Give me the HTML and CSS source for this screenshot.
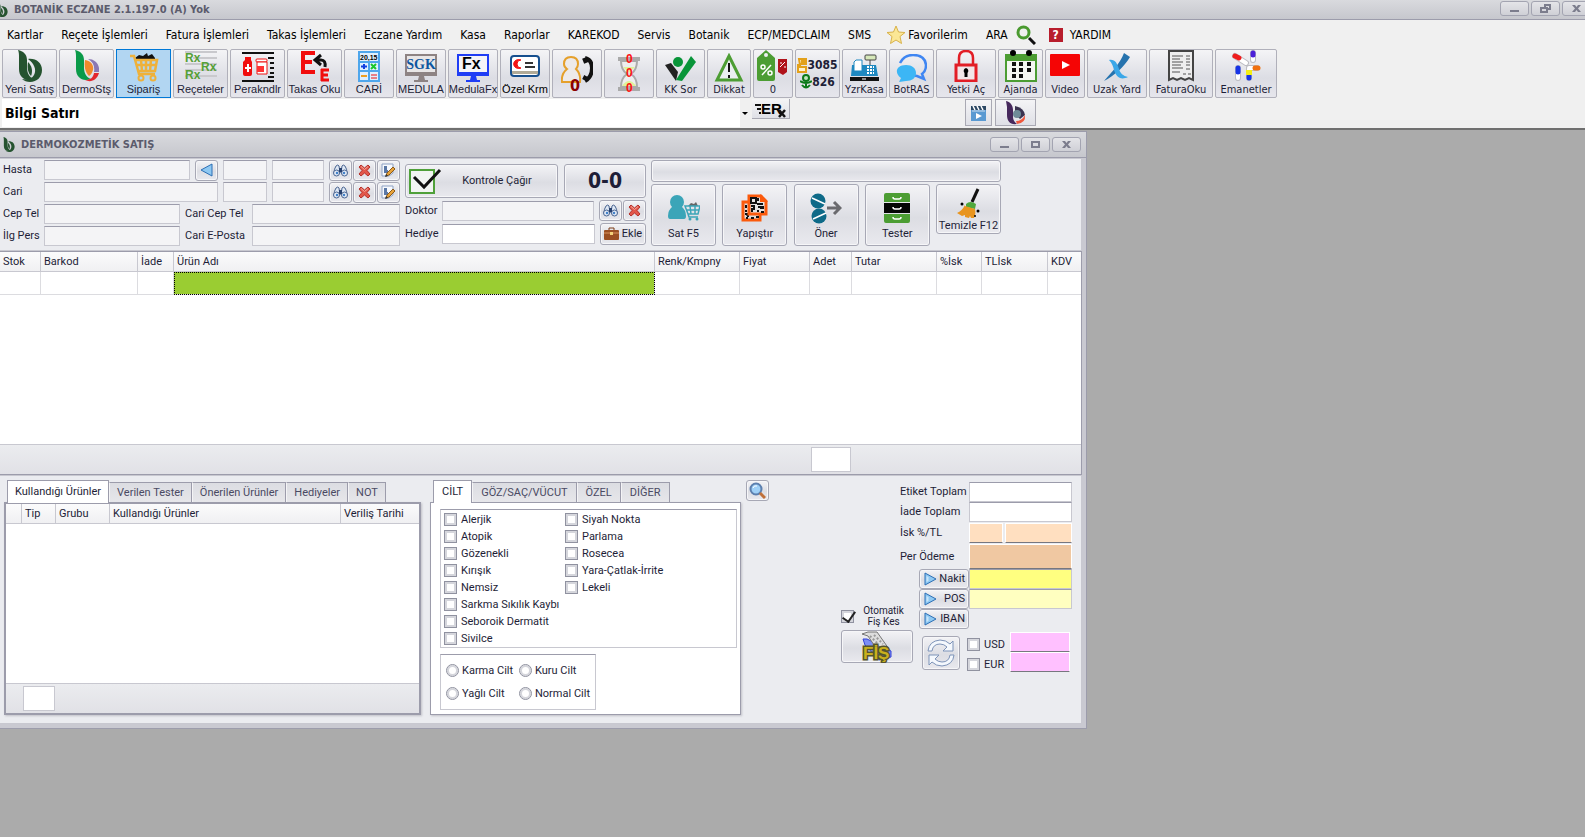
FILE: index.html
```html
<!DOCTYPE html>
<html lang="tr">
<head>
    <meta charset="UTF-8">
    <meta name="viewport" content="width=device-width, initial-scale=1.0">
    <title>BOTANİK ECZANE</title>
    <link rel="stylesheet" href="styles.css">
</head>
<body>
    <svg class="defs" aria-hidden="true">
        <symbol id="logo" viewBox="0 0 24 32">
            <path d="M0 0c5 1 9 4 9 10v7c0 6 2 10 7 12-8 3-15-1-15-10V8C1 5 1 2 0 0z"/>
            <path d="M10 9c8-1 14 4 14 11 0 7-5 12-12 12-3 0-6-1-8-3 5 1 10 0 12-4 3-5 0-12-6-16z"/>
            <path d="M10 12c4 4 5 9 3 14-3-3-4-8-3-14z"/>
        </symbol>
        <symbol id="binoculars" viewBox="0 0 15 13">
            <g fill="#dfe8f5" stroke="#4a6490"><path d="M3 2q2-2 3 0l1 7H1q0-4 2-7zM12 2q-2-2-3 0L8 9h6q0-4-2-7z"/><circle cx="3.500" cy="9" r="3"/><circle cx="11.500" cy="9" r="3"/></g>
            <path d="M6 4h3v4H6z" fill="#26406e"/><circle cx="4" cy="9" r="1.200" fill="#3f7fc8"/><circle cx="11" cy="9" r="1.200" fill="#3f7fc8"/>
        </symbol>
        <symbol id="cross" viewBox="0 0 13 13">
            <path d="M1 3l2-2 3.500 3L10 1l2 2-3 3.500L12 10l-2 2-3.500-3L3 12l-2-2 3-3.500z" fill="#e2574a" stroke="#b5302a"/>
            <path d="M3 2.500l3.500 3 3.500-3" fill="none" stroke="#f5a79c"/>
        </symbol>
        <symbol id="edit" viewBox="0 0 15 15">
            <path d="M1 1h11v9l-4 3H1z" fill="#f7f9fd" stroke="#8ea2c4"/><path d="M3 3h3v4h1v3H3z" fill="#5b78a6"/>
            <path d="M5 13l1-3 6-6 2 2-6 6z" fill="#e8a33a" stroke="#8b5a1a"/><path d="M4 14l1-3 2 2z" fill="#333"/>
        </symbol>
        <symbol id="play" viewBox="0 0 13 14"><path d="M1 1l11 6-11 6z" fill="#8ec8f2" stroke="#2c6fb5"/><path d="M2.500 4v6l2-1V5z" fill="#c9e6fa"/></symbol>
        <symbol id="minimize" viewBox="0 0 11 9"><path d="M1 6h9v2H1z"/></symbol>
        <symbol id="close" viewBox="0 0 11 9"><path d="M1 1h3l1.500 2L7 1h3L7 4.500 10 8H7L5.500 6 4 8H1l3-3.500z"/></symbol>
    </svg>

    <header class="titlebar app-title">
        <svg class="title-logo main-logo"><use href="#logo"/></svg>
        <h1>BOTANİK ECZANE 2.1.197.0 (A) Yok</h1>
        <div class="window-buttons">
            <button aria-label="Küçült"><svg><use href="#minimize"/></svg></button>
            <button aria-label="Geri yükle"><svg viewBox="0 0 11 9"><path fill-rule="evenodd" d="M4 0h7v6H8v3H0V3h4zm2 2v1h2v1h1V2zM2 5v2h4V5z"/></svg></button>
            <button aria-label="Kapat"><svg><use href="#close"/></svg></button>
        </div>
    </header>

    <nav class="menu">
        <a href="#">Kartlar</a>
        <a href="#">Reçete İşlemleri</a>
        <a href="#">Fatura İşlemleri</a>
        <a href="#">Takas İşlemleri</a>
        <a href="#">Eczane Yardım</a>
        <a href="#">Kasa</a>
        <a href="#">Raporlar</a>
        <a href="#">KAREKOD</a>
        <a href="#">Servis</a>
        <a href="#">Botanik</a>
        <a href="#">ECP/MEDCLAIM</a>
        <a href="#">SMS</a>
        <a href="#" class="menu-star"><svg width="20" height="20" viewBox="0 0 20 20"><path d="M10 1l2.500 6 6.500.5-5 4 1.500 7L10 15l-5.500 3.500 1.500-7-5-4L7.500 7z" fill="#fbe795" stroke="#d8b24a"/></svg>Favorilerim</a>
        <a href="#" class="menu-search">ARA<svg width="20" height="20" viewBox="0 0 20 20"><circle cx="7.500" cy="7.500" r="5.500" fill="none" stroke="#4a9a2f" stroke-width="3"/><path d="M13 13l6 6" stroke="#111" stroke-width="3"/></svg></a>
        <a href="#" class="menu-help"><span>?</span>YARDIM</a>
    </nav>

    <div class="toolbar">
        <button class="w55 sans"><svg width="24" height="32" fill="#25532f"><use href="#logo"/></svg>Yeni Satış</button>
        <button class="w55 sans"><svg width="24" height="32" viewBox="0 0 24 32"><path d="M0 0c5 1 9 4 9 10v7c0 6 2 10 7 12-8 3-15-1-15-10V8C1 5 1 2 0 0z" fill="#0a9a49"/><path d="M10 10c6 1 9 5 8 10-1 3-2 5-4 6-4-4-5-10-4-16z" fill="#f08a2c"/><path d="M13 9c7 0 12 5 11 13h-5c1-6-1-10-6-13z" fill="#8a78b4"/><path d="M10 30c5 0 8-2 9-7h5c-2 7-8 10-14 7z" fill="#e3262e"/></svg>DermoStş</button>
        <button class="w55 sans selected"><svg width="30" height="29" viewBox="0 0 30 29"><path d="M6 5l4-3 4 1 4-3 1 3 4-2 3 4v3H7z" fill="#111"/><path d="M1 3h4l5 18h16M6 7h22l-2 11H9M7 12h20M12 7l1 11M17 7v11M22 7l-1 11" fill="none" stroke="#eeb13b" stroke-width="2.500"/><circle cx="12" cy="25" r="2.500" fill="none" stroke="#eeb13b" stroke-width="2"/><circle cx="24" cy="25" r="2.500" fill="none" stroke="#eeb13b" stroke-width="2"/></svg>Sipariş</button>
        <button class="w55 sans"><svg width="32" height="32" viewBox="0 0 32 32"><path d="M0 2h32M8 8h24M0 14h32M0 20h32M0 26h32" stroke="#c9c9cd" stroke-width="2"/><g font-family="Liberation Sans" font-size="12" font-weight="bold" fill="#55a037"><text x="0" y="12">Rx</text><text x="16" y="21">Rx</text><text x="0" y="29">Rx</text></g></svg>Reçeteler</button>
        <button class="w55 sans"><svg width="32" height="30" viewBox="0 0 32 30"><path d="M0 1h32M0 29h32M26 6h6M28 11h4M28 16h4M28 21h4M26 25h6" stroke="#111" stroke-width="2"/><path d="M3 5h6v3l1 2v12q0 2-2 2H3q-2 0-2-2V10l2-2z" fill="#f10d0d"/><path d="M6 12v8M3 16h6" stroke="#fff" stroke-width="2"/><rect x="14" y="7" width="11" height="3" rx="1" fill="#fff" stroke="#e11"/><path d="M15 10h10v12H15z" fill="#fff" stroke="#e11"/><path d="M15 14h7v6h-7z" fill="#f33"/></svg>Perakndlr</button>
        <button class="w55 sans"><svg width="31" height="31" viewBox="0 0 31 31"><path d="M2 2h14M2 11h11M2 21h14M4 1v20" stroke="#f10d0d" stroke-width="4" fill="none"/><path d="M22 19h8M22 24h7M22 29h8M23 18v12" stroke="#f10d0d" stroke-width="3" fill="none"/><path d="M22 4l-6 5 6 5M17 9h5q5 0 4 7" fill="none" stroke="#111" stroke-width="3"/></svg>Takas Oku</button>
        <button class="w50 sans"><svg width="22" height="31" viewBox="0 0 22 31"><rect x="1" y="1" width="20" height="29" fill="#dff0ff" stroke="#4ea6ec" stroke-width="2"/><text x="2" y="9" font-family="Liberation Sans" font-size="7" font-weight="bold">20,15</text><path d="M1 11h20M1 20h20M11 11v19" stroke="#4ea6ec" stroke-width="2"/><path d="M3 15.500h6M6 13v5" stroke="#1240e0" stroke-width="2"/><path d="M13 13l5 5m0-5l-5 5" stroke="#19c82c" stroke-width="2"/><path d="M3 25h6" stroke="#f0a020" stroke-width="2"/><path d="M13 24h6m-6 3h6" stroke="#e11" /></svg>CARİ</button>
        <button class="w50 sans"><svg width="32" height="28" viewBox="0 0 32 28"><path d="M1 1h30v20H1z" fill="#e8e6e6" stroke="#8d8383" stroke-width="2"/><path d="M1 18h30v4H1zM14 22h5l1 4h3v2H9v-2h4z" fill="#8d8383"/><text x="16" y="15" text-anchor="middle" font-family="Liberation Serif" font-size="14" font-weight="bold" fill="#0d56a0">SGK</text></svg>MEDULA</button>
        <button class="w50 sans"><svg width="32" height="28" viewBox="0 0 32 28"><path d="M1 1h30v20H1z" fill="#f4f4f8" stroke="#1f3df5" stroke-width="2"/><path d="M1 18h30v4H1zM14 22h5l1 4h3v2H9v-2h4z" fill="#1f3df5"/><text x="5" y="15" font-family="Liberation Sans" font-size="16" font-weight="bold">Fx</text></svg>MedulaFx</button>
        <button class="w50 sans dark"><svg class="card" width="30" height="23" viewBox="0 0 30 23"><rect x="1" y="1" width="28" height="20" rx="3" fill="#fff" stroke="#164f8e" stroke-width="2"/><path d="M2 16h26v3H2z" fill="#b0aa98"/><path d="M11 5a5 4.500 0 1 0 0 8 4 4 0 1 1 0-8z" fill="#f21212" stroke="#f21212"/><path d="M15 8h8M15 12h10" stroke="#333" stroke-width="2"/></svg>Özel Krm</button>
        <button class="w50 counter"><svg width="32" height="28" viewBox="0 0 32 28"><path d="M10 1q7 0 7 7 0 3-2 5 5 5 4 13H1q-1-8 5-13-3-2-3-5 0-7 7-7z" fill="#edeaea" stroke="#e5a02b" stroke-width="2"/><path d="M23 2l2 5M23 24l2-4M24 2q7 2 7 10 0 9-7 13" fill="none" stroke="#111" stroke-width="4"/></svg><b>0</b></button>
        <button class="w50 hourglass"><svg width="24" height="43" viewBox="0 0 24 43"><path d="M1 7h22M1 37h22" stroke="#aaa" stroke-width="4"/><path d="M4 9q0 9 6 13-6 4-6 13h16q0-9-6-13 6-4 6-13z" fill="#eee" stroke="#aaa" stroke-width="2"/><path d="M6 15h12l-6 6zM5 34q7-10 14 0z" fill="#dff29a"/><g font-family="Liberation Sans" font-size="12" font-weight="bold" fill="#f11"><text x="9" y="11">0</text><text x="9" y="25">0</text><text x="9" y="40">0</text></g></svg></button>
        <button class="w49"><svg width="31" height="27" viewBox="0 0 31 27"><path d="M0 10l6-2 7 9-2 9z" fill="#222"/><circle cx="13" cy="7" r="5" fill="#099539"/><path d="M11 25l15-24 5 6-14 19z" fill="#099539"/></svg>KK Sor</button>
        <button class="w44"><svg width="30" height="29" viewBox="0 0 30 29"><path d="M15 3l12 24H3z" fill="#e9eef0" stroke="#4c9d33" stroke-width="3"/><path d="M15 10v9M15 22v3" stroke="#111" stroke-width="2"/></svg>Dikkat</button>
        <button class="w40"><svg width="32" height="32" viewBox="0 0 32 32"><path fill-rule="evenodd" d="M9 0l9 8v21q0 2-2 2H2q-2 0-2-2V8zM9 3a2 2 0 1 0 0 4 2 2 0 1 0 0-4z" fill="#4c9d33"/><path d="M14 15L5 25" stroke="#fff" stroke-width="1.500"/><circle cx="6" cy="17" r="2" fill="none" stroke="#fff" stroke-width="1.500"/><circle cx="13" cy="23" r="2" fill="none" stroke="#fff" stroke-width="1.500"/><path d="M21 9h9v13l-4 3-5-3z" fill="#b0121a"/><path d="M23 17l5-5M24 12v2M28 16v2" stroke="#fff"/></svg>0</button>
        <button class="w45 totals">
            <span><svg width="10" height="15" viewBox="0 0 10 15"><path d="M2 1h7v5H3v3h6v5H1V7h2zM5 3h2v3H5z" fill="#fff2cc" stroke="#e3a11b" stroke-width="2"/></svg>3085</span>
            <span><svg width="12" height="16" viewBox="0 0 12 16"><circle cx="6" cy="4" r="3" fill="#bfe5bf" stroke="#0b7a18" stroke-width="2"/><path d="M0 7q6 4 12 0M6 8v5M2 11q4 5 8 0" fill="none" stroke="#0b7a18" stroke-width="2"/></svg>826</span>
        </button>
        <button class="w45"><svg width="29" height="28" viewBox="0 0 29 28"><path d="M2 11h24l2 11H1z" fill="#1e88c0"/><path d="M6 6h6v11H4V8z" fill="#fff" stroke="#1e88c0"/><rect x="15" y="1" width="11" height="5" rx="1" fill="#d7e8ba" stroke="#444"/><path d="M20 6v5" stroke="#444"/><path d="M17 13h7M17 16h7M17 19h7" stroke="#fff" stroke-width="2" stroke-dasharray="2 1"/><path d="M0 23h29v4H0z" fill="#111"/><path d="M12 25h4" stroke="#fff"/></svg>YzrKasa</button>
        <button class="w45"><svg width="31" height="28" viewBox="0 0 31 28"><path d="M4 9Q8 1 17 1q12 0 13 10 0 6-4 9l2 5-7-3-8-1" fill="none" stroke="#3f86f2" stroke-width="2.500"/><path d="M10 11c6 0 10 3 10 8s-4 8-10 8l-7 1 2-4c-7-5-5-13 5-13z" fill="#3cb6f5"/></svg>BotRAS</button>
        <button class="w60"><svg width="24" height="32" viewBox="0 0 24 32"><path d="M5 15V8q0-7 7-7t7 7v7" fill="none" stroke="#e21e26" stroke-width="2.500"/><rect x="2" y="15" width="20" height="16" fill="#f2e6e8" stroke="#e21e26" stroke-width="3"/><path d="M12 18a3 3 0 0 1 1.500 5v4h-3v-4a3 3 0 0 1 1.500-5z"/></svg>Yetki Aç</button>
        <button class="w45"><svg width="32" height="32" viewBox="0 0 32 32"><path d="M1 5h30v26H1z" fill="#f4f6f2" stroke="#4c9d33" stroke-width="2"/><path d="M1 5h30v6H1z" fill="#4c9d33"/><circle cx="8" cy="3" r="3"/><circle cx="24" cy="3" r="3"/><path d="M7 14h4M14 14h4M22 14h4M7 20h4M14 20h4M22 20h4M7 26h4M14 26h4" stroke="#111" stroke-width="4"/></svg>Ajanda</button>
        <button class="w40"><svg width="30" height="28" viewBox="0 0 30 28"><rect width="30" height="22" rx="1" fill="#f50505"/><path d="M12 7l8 4-8 4z" fill="#fff"/></svg>Video</button>
        <button class="w60"><svg width="27" height="29" viewBox="0 0 27 29"><path d="M20 0l6 4C20 14 10 23 0 28 9 18 16 10 20 0z" fill="#2673ae"/><path d="M5 7c6-1 8 3 10 9 1 4 4 7 9 8-8 4-12-1-14-7-1-4-2-7-5-10z" fill="#3aa7e8"/></svg>Uzak Yard</button>
        <button class="w64"><svg width="26" height="32" viewBox="0 0 26 32"><path d="M1 1h24v29l-4-2-4 2-4-2-4 2-4-2-4 2z" fill="#eee" stroke="#444" stroke-width="2"/><path d="M4 6h11M4 9h8M4 12h11M4 15h9M4 18h11M4 22h8M18 6h4M18 9h4M18 12h4M18 15h4M18 19h4M15 24h3M20 24h3" stroke="#555" stroke-width="1"/></svg>FaturaOku</button>
        <button class="w62"><svg width="30" height="32" viewBox="0 0 30 32"><g stroke-linecap="round" stroke-width="5"><g stroke="#bcbcc2" stroke-width="6"><path d="M4 6l11 7M22 3v7M18 18h8M7 18v10M18 19v9"/></g><g stroke="#fff" stroke-width="4"><path d="M4 6l11 7M22 3v7M18 18h8M7 18v10M18 19v9"/></g><path d="M4 6l4 2" stroke="#ef1c1c"/><path d="M22 3v2" stroke="#4b1fd8"/><path d="M24 18h3" stroke="#f0700f"/><path d="M7 18v4M18 26v2" stroke="#1633e6"/></g><path d="M15 20h6v5h-6z" fill="#f3ee12"/></svg>Emanetler</button>
    </div>

    <div class="info-row">
        <div class="info-select">
            <select aria-label="Bilgi Satırı"><option>Bilgi Satırı</option></select>
        </div>
        <button class="erx" aria-label="Hızlı ERx"><svg width="32" height="18" viewBox="0 0 32 18"><path d="M0 5h6M2 9h4M4 13h2" stroke="#111" stroke-width="2"/><text x="6" y="14" font-family="Liberation Sans" font-size="15" font-weight="bold">ER</text><path d="M24 10l6 7M30 10l-6 7" stroke="#111" stroke-width="2.500"/></svg></button>
        <button class="film" aria-label="Video"><svg width="15" height="16" viewBox="0 0 15 16"><path d="M0 1h15v15H0z" fill="#5a9ad2"/><path d="M0 1h15v4H0z" fill="#2c4864"/><path d="M2 1l2 4M6 1l2 4M10 1l2 4" stroke="#fff" stroke-width="1.500"/><path d="M1 6h13" stroke="#cde"/><path d="M5 8l6 3-6 3z" fill="#fff"/></svg></button>
        <button class="bot" aria-label="Asistan"><svg width="20" height="24" viewBox="0 0 20 24"><path d="M0 0c5 1 7 5 7 9v7q0 4 4 7C4 24 1 20 1 14V6z" fill="#46285c"/><path d="M9 5q9 2 10 9l-5 4-5-5z" fill="#3a3350"/><circle cx="11" cy="13" r="4" fill="#6f8b98"/><path d="M10 20q6 0 9-6 1 8-8 9z" fill="#f0583c"/></svg></button>
    </div>

    <main class="desktop">
        <section class="window">
            <header class="titlebar">
                <svg class="title-logo"><use href="#logo"/></svg>
                <h2>DERMOKOZMETİK SATIŞ</h2>
                <div class="window-buttons">
                    <button aria-label="Küçült"><svg><use href="#minimize"/></svg></button>
                    <button aria-label="Büyüt"><svg viewBox="0 0 11 9"><path fill-rule="evenodd" d="M1 1h9v7H1zm2 2v3h5V3z"/></svg></button>
                    <button aria-label="Kapat"><svg><use href="#close"/></svg></button>
                </div>
            </header>

            <form class="customer">
                <div class="person">
                    <div class="row">
                        <label for="hasta">Hasta</label>
                        <input id="hasta" class="grow" type="text">
                        <button type="button" class="icon-btn prev" aria-label="Önceki"><svg width="13" height="14" viewBox="0 0 13 14"><path d="M12 1v12L1 7z" fill="#8ec8f2" stroke="#2c6fb5"/></svg></button>
                        <input class="code" type="text" aria-label="Hasta kodu">
                        <input class="number" type="text" aria-label="Hasta no">
                        <div class="icon-group">
                            <button type="button" class="icon-btn" aria-label="Hasta ara"><svg width="15" height="13"><use href="#binoculars"/></svg></button>
                            <button type="button" class="icon-btn" aria-label="Hasta sil"><svg width="13" height="13"><use href="#cross"/></svg></button>
                            <button type="button" class="icon-btn" aria-label="Hasta düzenle"><svg width="15" height="15"><use href="#edit"/></svg></button>
                        </div>
                    </div>
                    <div class="row">
                        <label for="cari">Cari</label>
                        <input id="cari" class="grow" type="text">
                        <input class="code" type="text" aria-label="Cari kodu">
                        <input class="number" type="text" aria-label="Cari no">
                        <div class="icon-group">
                            <button type="button" class="icon-btn" aria-label="Cari ara"><svg width="15" height="13"><use href="#binoculars"/></svg></button>
                            <button type="button" class="icon-btn" aria-label="Cari sil"><svg width="13" height="13"><use href="#cross"/></svg></button>
                            <button type="button" class="icon-btn" aria-label="Cari düzenle"><svg width="15" height="15"><use href="#edit"/></svg></button>
                        </div>
                    </div>
                    <div class="row">
                        <label for="cep">Cep Tel</label>
                        <input id="cep" class="grow" type="text">
                        <label for="cariCep" class="wide">Cari Cep Tel</label>
                        <input id="cariCep" class="contact" type="text">
                    </div>
                    <div class="row">
                        <label for="ilg">İlg Pers</label>
                        <input id="ilg" class="grow" type="text">
                        <label for="eposta" class="wide">Cari E-Posta</label>
                        <input id="eposta" class="contact" type="text">
                    </div>
                </div>

                <div class="doctor">
                    <div class="check-row">
                        <button type="button" class="btn control"><svg width="33" height="27" viewBox="0 0 33 27"><rect x="1" y="2" width="24" height="23" fill="#f2f5f3" stroke="#4fa03a" stroke-width="2"/><path d="M5 9l10 10L31 2" fill="none" stroke="#111" stroke-width="3"/></svg><span>Kontrole Çağır</span></button>
                        <button type="button" class="btn score">0-0</button>
                    </div>
                    <div class="row">
                        <label for="doktor">Doktor</label>
                        <input id="doktor" class="grow" type="text">
                        <div class="icon-group">
                            <button type="button" class="icon-btn" aria-label="Doktor ara"><svg width="15" height="13"><use href="#binoculars"/></svg></button>
                            <button type="button" class="icon-btn" aria-label="Doktor sil"><svg width="13" height="13"><use href="#cross"/></svg></button>
                        </div>
                    </div>
                    <div class="row">
                        <label for="hediye">Hediye</label>
                        <input id="hediye" class="grow white" type="text">
                        <button type="button" class="btn add"><svg width="15" height="13" viewBox="0 0 15 13"><path d="M5 3V1h5v2" fill="none" stroke="#7a3b17"/><rect x="0" y="3" width="15" height="10" rx="1" fill="#9a4f22"/><path d="M0 6h15" stroke="#d99560"/><path d="M6 5h3v3H6z" fill="#f3d27a"/></svg>Ekle</button>
                    </div>
                </div>

                <div class="actions">
                    <button type="button" class="btn message" aria-label="Mesaj"></button>
                    <div class="action-buttons">
                        <button type="button" class="btn"><svg width="32" height="32" viewBox="0 0 32 32"><circle cx="9" cy="9" r="7" fill="#3ba5b8"/><path d="M5 13h8q5 4 5 10 0 3-2 3H2q-2 0-2-3 0-6 5-10z" fill="#3ba5b8"/><path d="M20 13l3-3 3 1 2-2 2 4z" fill="#666"/><path d="M17 13h15l-2 8H20zM18 17h13M22 13l1 8M27 13v8M20 21l1 3h9" fill="none" stroke="#3ba5b8" stroke-width="1.500"/><circle cx="22" cy="26" r="1.500" fill="#3ba5b8"/><circle cx="29" cy="26" r="1.500" fill="#3ba5b8"/></svg>Sat F5</button>
                        <button type="button" class="btn"><svg width="28" height="32" viewBox="0 0 28 32"><path d="M2 9h17v18H2z" fill="#ddd" stroke="#fb5a0c" stroke-width="3"/><path d="M5 12v3M4 18h2M4 21h3v3M10 25h3M15 24h3M5 25h2" stroke="#111" stroke-width="2"/><path d="M8 3h12l5 5v13H8z" fill="#e4e4e4" stroke="#fb5a0c" stroke-width="3"/><path d="M19 1l8 8h-8z" fill="#fb5a0c"/><path d="M10 5h5v5h-5zM17 5v3M16 11h6M10 13h3v2M11 19v-3h3M17 14h3v2M22 13v3M16 18h2M20 19h3" fill="none" stroke="#111" stroke-width="2"/></svg>Yapıştır</button>
                        <button type="button" class="btn"><svg width="32" height="32" viewBox="0 0 32 32"><circle cx="8" cy="8" r="7.500" fill="#0e6a88"/><circle cx="9" cy="23" r="7.500" fill="#0e6a88"/><path d="M2 5l13 6M3 26l13-6" stroke="#fff" stroke-width="1.500"/><path d="M17 15h12M24 9l6 6-6 6" fill="none" stroke="#6a6a6e" stroke-width="3"/></svg>Öner</button>
                        <button type="button" class="btn"><svg width="26" height="32" viewBox="0 0 26 32"><path d="M2 0h22q2 0 2 2v7H0V2q0-2 2-2zM0 21h26v7q0 2-2 2H2q-2 0-2-2z" fill="#4c9d33"/><path d="M0 10h26v10H0z" fill="#050505"/><path d="M9 4q0 2 2 2h4q2 0 2-2M9 14q0 2 2 2h4q2 0 2-2M9 24q0 2 2 2h4q2 0 2-2" fill="none" stroke="#fff" stroke-width="1.500"/></svg>Tester</button>
                        <button type="button" class="btn clear"><svg width="24" height="31" viewBox="0 0 24 31"><path d="M21 1l-6 13" stroke="#111" stroke-width="3"/><path d="M9 16q4-4 10 0l-1 5-9-2z" fill="#4fa83c"/><path d="M8 18l10 3q1 6-1 9h-3l-1-2-1 2-4-1v-2l-3 1-5-3q5-2 8-8z" fill="#e8941e"/><circle cx="5" cy="16" r="1.500"/><circle cx="21" cy="23" r="1.500"/><circle cx="18" cy="28" r="1"/></svg>Temizle F12</button>
                    </div>
                </div>
            </form>

            <div class="grid">
                <table>
                    <colgroup><col class="c-stok"><col class="c-barkod"><col class="c-iade"><col><col class="c-renk"><col class="c-fiyat"><col class="c-adet"><col class="c-renk"><col class="c-isk"><col class="c-tl"><col class="c-kdv"></colgroup>
                    <thead>
                        <tr><th>Stok</th><th>Barkod</th><th>İade</th><th>Ürün Adı</th><th>Renk/Kmpny</th><th>Fiyat</th><th>Adet</th><th>Tutar</th><th>%İsk</th><th>TLİsk</th><th>KDV</th></tr>
                    </thead>
                    <tbody>
                        <tr><td></td><td></td><td></td><td class="active-cell"></td><td></td><td></td><td></td><td></td><td></td><td></td><td></td></tr>
                    </tbody>
                </table>
                <div class="grid-footer"><output aria-label="Toplam adet"></output></div>
            </div>

            <div class="bottom">
                <div class="history">
                    <div class="tabs">
                        <button class="active">Kullandığı Ürünler</button>
                        <button>Verilen Tester</button>
                        <button>Önerilen Ürünler</button>
                        <button>Hediyeler</button>
                        <button>NOT</button>
                    </div>
                    <div class="tab-panel thick">
                        <table>
                            <colgroup><col class="h-mark"><col class="h-tip"><col class="h-grubu"><col><col class="h-tarih"></colgroup>
                            <thead>
                                <tr><th></th><th>Tip</th><th>Grubu</th><th>Kullandığı Ürünler</th><th>Veriliş Tarihi</th></tr>
                            </thead>
                        </table>
                        <div class="grid-footer"><output aria-label="Kayıt sayısı"></output></div>
                    </div>
                </div>

                <div class="skin">
                    <div class="tabs">
                        <button class="active">CİLT</button>
                        <button>GÖZ/SAÇ/VÜCUT</button>
                        <button>ÖZEL</button>
                        <button>DİĞER</button>
                    </div>
                    <div class="tab-panel">
                        <div class="checks">
                            <label><input type="checkbox">Alerjik</label>
                            <label><input type="checkbox">Atopik</label>
                            <label><input type="checkbox">Gözenekli</label>
                            <label><input type="checkbox">Kırışık</label>
                            <label><input type="checkbox">Nemsiz</label>
                            <label><input type="checkbox">Sarkma Sıkılık Kaybı</label>
                            <label><input type="checkbox">Seboroik Dermatit</label>
                            <label><input type="checkbox">Sivilce</label>
                            <label><input type="checkbox">Siyah Nokta</label>
                            <label><input type="checkbox">Parlama</label>
                            <label><input type="checkbox">Rosecea</label>
                            <label><input type="checkbox">Yara-Çatlak-İrrite</label>
                            <label><input type="checkbox">Lekeli</label>
                        </div>
                        <div class="radios">
                            <label><input type="radio" name="cilt">Karma Cilt</label>
                            <label><input type="radio" name="cilt">Kuru Cilt</label>
                            <label><input type="radio" name="cilt">Yağlı Cilt</label>
                            <label><input type="radio" name="cilt">Normal Cilt</label>
                        </div>
                    </div>
                </div>

                <button class="icon-btn search" aria-label="Ara"><svg width="17" height="17" viewBox="0 0 17 17"><circle cx="7" cy="7" r="5.500" fill="#9fd0f7" stroke="#5c7fae" stroke-width="2"/><path d="M4 6q1-3 4-2" stroke="#fff" fill="none"/><path d="M11 11l5 5" stroke="#c0703a" stroke-width="3"/></svg></button>

                <div class="payment">
                    <div class="totals-grid">
                        <label for="etiket">Etiket Toplam</label>
                        <input id="etiket" class="white" type="text">
                        <label for="iade">İade Toplam</label>
                        <input id="iade" class="white" type="text">
                        <label for="isk">İsk %/TL</label>
                        <div class="split"><input id="isk" class="flat peach" type="text"><input class="flat peach" type="text" aria-label="İskonto TL"></div>
                        <label for="per">Per Ödeme</label>
                        <input id="per" class="flat orange" type="text">
                    </div>
                    <div class="pay-area">
                        <div class="receipt">
                            <label><input type="checkbox" checked><span>Otomatik<br>Fiş Kes</span></label>
                            <button class="btn" aria-label="Fiş"><svg width="32" height="32" viewBox="0 0 32 32"><path d="M2 8h4l24 12v6l-12 3L4 14z" fill="#7c8ef5" stroke="#3443d8"/><path d="M1 3l6-2h9l12 17-15-4-6-9z" fill="#ddd" stroke="#777"/><path d="M9 5l8 8M13 4l9 9" stroke="#999" stroke-dasharray="2 2" stroke-width="2"/><text x="2" y="28" font-family="Liberation Sans" font-size="17" font-weight="bold" fill="#c9b01c" stroke="#55542c" stroke-width="3" paint-order="stroke">FİŞ</text></svg></button>
                        </div>
                        <div class="pay-right">
                            <div class="pay-methods">
                                <button class="btn"><svg width="13" height="14"><use href="#play"/></svg>Nakit</button>
                                <input class="yellow" type="text" aria-label="Nakit">
                                <button class="btn"><svg width="13" height="14"><use href="#play"/></svg>POS</button>
                                <input class="light-yellow" type="text" aria-label="POS">
                                <button class="btn"><svg width="13" height="14"><use href="#play"/></svg>IBAN</button>
                            </div>
                            <div class="currency">
                                <button class="btn refresh" aria-label="Yenile"><svg width="28" height="28" viewBox="0 0 28 28"><g fill="#f4f8fd" stroke="#7d93b8"><path d="M1 12Q2 2 13 1q6 0 10 4l3-3v10H16l4-4q-3-3-7-3-7 0-8 7z"/><path d="M27 16q-1 10-12 11-6 0-10-4l-3 3V16h10l-4 4q3 3 7 3 7 0 8-7z"/></g></svg></button>
                                <div class="rates">
                                    <label><input type="checkbox">USD</label>
                                    <input class="flat pink" type="text" aria-label="USD tutarı">
                                    <label><input type="checkbox">EUR</label>
                                    <input class="flat pink" type="text" aria-label="EUR tutarı">
                                </div>
                            </div>
                        </div>
                    </div>
                </div>
            </div>
        </section>
    </main>
</body>
</html>
```
FILE: styles.css
```css
:root {
    --line: #9c9cab;
    --line-light: #c8c8d0;
    --panel: #ebecf0;
    --field: #f4f4f6;
    --text: #1e1e37;
    --ui-font: Roboto, "Noto Sans", sans-serif;
    --title-font: "DejaVu Sans Condensed", "DejaVu Sans", sans-serif;
}
* {
    box-sizing: border-box;
}
body {
    margin: 0;
    height: 100vh;
    display: flex;
    flex-direction: column;
    overflow: hidden;
    background: #f0f0f0;
    color: var(--text);
    font-family: var(--ui-font);
    font-size: 11px;
    line-height: 14px;
}
button, input, select {
    margin: 0;
    padding: 0;
    font: inherit;
    color: inherit;
    border-radius: 0;
}
button svg {
    flex: none;
}
.defs {
    display: none;
}

/* title bars */
.titlebar {
    display: flex;
    align-items: center;
    height: 20px;
    background: linear-gradient(#d9dade, #c6c7cd);
    border-bottom: 1px solid var(--line);
    flex: none;
}
.titlebar h1, .titlebar h2 {
    flex: 1;
    margin: 0 0 0 6px;
    font-family: var(--title-font);
    font-size: 11px;
    font-weight: bold;
    color: #5b5b6c;
}
.title-logo {
    width: 12px;
    height: 15px;
    fill: #25532f;
}
.main-logo {
    margin-left: -4px;
}
.window-buttons {
    display: flex;
    gap: 2px;
}
.app-title .window-buttons {
    margin-right: -6px;
    padding-bottom: 2px;
}
.window-buttons button {
    display: flex;
    align-items: center;
    justify-content: center;
    width: 29px;
    height: 15px;
    border: 1px solid #a3a4b1;
    border-radius: 3px;
    background: linear-gradient(#e4e4e8, #cfd0d6);
}
.window-buttons svg {
    width: 11px;
    height: 9px;
    fill: #7c7d8d;
}

/* menu */
.menu {
    display: flex;
    align-items: center;
    gap: 18px;
    height: 29px;
    padding-left: 7px;
    font-family: var(--title-font);
    font-size: 12px;
    flex: none;
}
.menu a {
    display: flex;
    align-items: center;
    color: #000;
    text-decoration: none;
    white-space: nowrap;
}
.menu-star {
    gap: 2px;
    margin-left: -3px;
}
.menu .menu-search {
    gap: 8px;
}
.menu .menu-help {
    gap: 7px;
    margin-left: -5px;
}
.menu-help span {
    width: 14px;
    height: 14px;
    background: #b81d2c;
    color: #fff;
    font-weight: bold;
    text-align: center;
}

/* toolbar */
.toolbar {
    display: flex;
    gap: 2px;
    height: 49px;
    padding-left: 2px;
    flex: none;
}
.toolbar button {
    display: flex;
    flex-direction: column;
    align-items: center;
    justify-content: flex-end;
    flex: none;
    border: 1px solid #b0b0ba;
    border-radius: 2px;
    background: linear-gradient(#f4f4f6, #dcdde4 60%, #e6e6ec);
    font-family: var(--title-font);
    font-size: 11px;
    line-height: 15px;
    white-space: nowrap;
}
.toolbar .sans {
    font-family: "Liberation Sans", sans-serif;
}
.toolbar .dark {
    color: #000;
}
.toolbar .card {
    margin-bottom: 4px;
}
.toolbar .selected {
    background: #b2d6f2;
    border-color: #0078d7;
    border-radius: 0;
}
.w40 { width: 40px; }
.w44 { width: 44px; }
.w45 { width: 45px; }
.w49 { width: 49px; }
.w50 { width: 50px; }
.w55 { width: 55px; }
.w60 { width: 60px; }
.w62 { width: 62px; }
.w64 { width: 64px; }
.toolbar .counter, .toolbar .hourglass {
    position: relative;
    justify-content: center;
}
.counter svg {
    margin-bottom: 8px;
}
.counter b {
    position: absolute;
    left: 17px;
    bottom: 4px;
    font-size: 16px;
    color: #8b0000;
}
.toolbar .totals {
    justify-content: center;
    font-size: 12px;
    font-weight: bold;
}
.totals span {
    display: flex;
    align-items: center;
    height: 17px;
}

/* info row */
.info-row {
    display: flex;
    align-items: flex-start;
    height: 32px;
    padding: 1px 0 0 2px;
    border-bottom: 2px solid #6f6f6f;
    flex: none;
}
.info-select {
    position: relative;
    width: calc(100% - 834px);
}
.info-select select {
    display: block;
    width: 100%;
    height: 28px;
    padding-left: 3px;
    border: 0;
    border-right: 11px solid #f0f0f0;
    background: #fff;
    appearance: none;
    color: #000;
    font-family: var(--title-font);
    font-size: 14px;
    font-weight: bold;
}
.info-select::after {
    content: "";
    position: absolute;
    right: 3px;
    top: 13px;
    border: 3px solid transparent;
    border-top-color: #000;
    border-bottom: 0;
}
.info-row button {
    display: flex;
    align-items: center;
    justify-content: center;
    height: 27px;
    border: 1px solid #a9a9b3;
    background: linear-gradient(#f4f4f6, #dfe0e6);
}
.info-row .erx {
    width: 38px;
    height: 20px;
    margin-left: 1px;
    border-width: 0 1px 1px 0;
}
.info-row .film {
    width: 27px;
    margin-left: 175px;
}
.info-row .bot {
    width: 41px;
    margin-left: 3px;
}

/* desktop and child window */
.desktop {
    flex: 1;
    display: flex;
    padding: 1px 498px 108px 0;
    background: #ababab;
    min-height: 0;
}
.window {
    flex: 1;
    display: flex;
    flex-direction: column;
    min-width: 0;
    padding: 0 4px 4px 0;
    background: #c9c9d1;
    border: 1px solid var(--line);
    border-left: 0;
}
.window .titlebar {
    height: 26px;
    margin-right: -4px;
    padding: 0 5px 0 3px;
}
.btn, .icon-btn {
    display: flex;
    align-items: center;
    justify-content: center;
    border: 1px solid #a7a8b5;
    border-radius: 3px;
    background: linear-gradient(#f3f3f6, #dcdde3 55%, #e9e9ee);
    box-shadow: inset 0 0 0 1px #f6f6f8;
}
.icon-btn {
    flex: none;
    width: 23px;
    height: 21px;
}
.icon-group {
    display: flex;
    gap: 1px;
}
input[type="text"] {
    min-width: 0;
    height: 20px;
    border: 1px solid var(--line-light);
    border-top-color: var(--line);
    background: var(--field);
}
input[type="text"].white {
    background: #fff;
}

/* customer form */
.customer {
    display: flex;
    gap: 5px;
    height: 93px;
    padding: 0 80px 0 3px;
    background: var(--panel);
    border: 1px solid var(--line-light);
    border-left: 0;
}
.row {
    display: flex;
    align-items: center;
    gap: 5px;
    height: 22px;
}
.row label {
    width: 36px;
    white-space: nowrap;
}
.row .wide {
    width: 62px;
}
.grow {
    flex: 1;
}
.code {
    width: 44px;
}
.number {
    width: 52px;
}
.contact {
    width: 148px;
}
.person {
    flex: none;
    width: 397px;
}
.doctor {
    flex: none;
    width: 241px;
    padding-top: 5px;
}
.check-row {
    display: flex;
    gap: 6px;
    margin-bottom: 1px;
}
.doctor .row {
    height: 23px;
}
.doctor .row label {
    width: 32px;
}
.control {
    flex: 1;
    height: 34px;
    padding-left: 3px;
}
.control span {
    flex: 1;
    padding-right: 5px;
}
.score {
    width: 82px;
    font-family: var(--title-font);
    font-size: 21px;
    font-weight: bold;
}
.add {
    width: 46px;
    height: 22px;
    gap: 3px;
}
.actions {
    flex: 1;
    padding-top: 1px;
}
.message {
    width: 100%;
    height: 22px;
}
.action-buttons {
    display: flex;
    justify-content: space-between;
    align-items: flex-start;
    margin-top: 2px;
}
.action-buttons .btn {
    flex-direction: column;
    width: 65px;
    height: 62px;
    gap: 2px;
    padding-top: 3px;
}
.action-buttons .clear {
    height: 50px;
    gap: 0;
    white-space: nowrap;
}

/* grids */
.grid {
    flex: 1;
    display: flex;
    flex-direction: column;
    min-height: 0;
    background: #fff;
    border-top: 1px solid var(--line);
    border-bottom: 1px solid var(--line);
    border-right: 1px solid var(--line);
}
table {
    width: 100%;
    table-layout: fixed;
    border-collapse: separate;
    border-spacing: 0;
}
th {
    height: 20px;
    padding: 0 0 0 3px;
    border-right: 1px solid var(--line-light);
    border-bottom: 1px solid var(--line-light);
    background: linear-gradient(#fbfbfc, #f0f0f2);
    font-weight: normal;
    text-align: left;
    white-space: nowrap;
}
th:last-child, td:last-child {
    border-right: 0;
}
td {
    height: 23px;
    padding: 0;
    border-right: 1px solid #dcdce0;
    border-bottom: 1px solid #dcdce0;
}
.active-cell {
    background: #9acd32;
    outline: 1px dotted #000;
    outline-offset: -1px;
}
.c-stok { width: 41px; }
.c-barkod { width: 97px; }
.c-iade { width: 36px; }
.c-renk { width: 85px; }
.c-fiyat { width: 70px; }
.c-adet { width: 42px; }
.c-isk { width: 45px; }
.c-tl { width: 66px; }
.c-kdv { width: 33px; }
.h-mark { width: 16px; }
.h-tip { width: 34px; }
.h-grubu { width: 54px; }
.h-tarih { width: 78px; }
.grid-footer {
    height: 30px;
    margin-top: auto;
    padding-top: 2px;
    border-top: 1px solid var(--line-light);
    background: linear-gradient(#ebecef, #e1e1e6);
}
.grid-footer output {
    display: block;
    width: 40px;
    height: 25px;
    margin-left: auto;
    margin-right: 230px;
    border: 1px solid var(--line-light);
    background: #fff;
}
.thick .grid-footer output {
    width: 32px;
    margin-left: 17px;
}

/* bottom area */
.bottom {
    display: flex;
    align-items: flex-start;
    height: 249px;
    padding: 4px 9px 8px 4px;
    background: var(--panel);
    border: 1px solid var(--line-light);
    border-left: 0;
}
.history {
    flex: none;
    width: 417px;
}
.skin {
    flex: none;
    width: 311px;
    margin-left: 9px;
}
.tabs {
    display: flex;
    align-items: flex-end;
    height: 22px;
    padding-left: 3px;
}
.tabs button {
    height: 20px;
    padding: 0 7px;
    border: 1px solid var(--line);
    border-bottom: 0;
    border-left: 1px solid #f4f4f6;
    background: linear-gradient(#dcdde2, #e6e6ea);
    color: #4a4a63;
    white-space: nowrap;
}
.tabs .active {
    height: 23px;
    margin-bottom: -1px;
    border-left-color: var(--line);
    background: #fff;
    color: var(--text);
    position: relative;
}
.skin .tabs button {
    padding: 0 8px;
}
.tab-panel {
    height: 213px;
    padding: 6px 3px 3px 9px;
    border: 1px solid var(--line);
    background: #fff;
    box-shadow: 1px 1px 2px #c0c0c8;
}
.thick {
    display: flex;
    flex-direction: column;
    padding: 0;
    border-width: 2px;
}
.checks, .radios {
    border: 1px solid var(--line-light);
    border-top-color: var(--line);
}
.checks {
    display: grid;
    grid-template-rows: repeat(8, 17px);
    grid-template-columns: 121px 1fr;
    grid-auto-flow: column;
    padding: 1px 0 0 3px;
    height: 139px;
}
.radios {
    display: grid;
    grid-template-columns: 73px 1fr;
    grid-auto-rows: 23px;
    width: 156px;
    height: 56px;
    margin-top: 6px;
    padding: 4px 0 0 5px;
}
.checks label, .radios label, .rates label {
    display: flex;
    align-items: center;
    gap: 4px;
    white-space: nowrap;
}
.radios label {
    gap: 3px;
}
input[type="checkbox"], input[type="radio"] {
    appearance: none;
    flex: none;
    width: 13px;
    height: 13px;
    border: 1px solid #9092a0;
    background: #fff;
    box-shadow: inset 0 0 0 2px #d5d6dc;
}
input[type="radio"] {
    border-radius: 50%;
}
input[type="checkbox"]:checked {
    position: relative;
}
input[type="checkbox"]:checked::after {
    content: "";
    position: absolute;
    left: 3px;
    top: -2px;
    width: 6px;
    height: 11px;
    border: solid #222;
    border-width: 0 2px 2px 0;
    transform: rotate(35deg);
}
.search {
    margin-left: 5px;
}

/* payment */
.payment {
    width: 231px;
    margin-left: auto;
    padding-top: 2px;
}
.totals-grid {
    display: grid;
    grid-template-columns: 69px 103px;
    grid-template-rows: 20px 20px 22px 25px;
    justify-content: end;
    align-items: center;
}
.totals-grid input {
    width: 100%;
}
.split {
    display: grid;
    grid-template-columns: 34px 1fr;
    gap: 2px;
}
input[type="text"].flat {
    height: 20px;
    border: 1px solid #fff;
    border-bottom-color: #77777f;
}
input[type="text"].orange {
    height: 25px;
    background: #f0c8a2;
}
input[type="text"].peach {
    background: #ffdfc0;
}
input[type="text"].pink {
    background: #ffc0ff;
}
input[type="text"].yellow {
    background: #ffff80;
}
input[type="text"].light-yellow {
    background: #ffffc0;
}
.pay-area {
    display: flex;
    justify-content: space-between;
}
.receipt {
    width: 72px;
    padding-top: 35px;
}
.receipt label {
    display: flex;
    align-items: center;
    height: 24px;
    font-size: 10px;
    line-height: 11px;
    text-align: center;
}
.receipt span {
    flex: 1;
}
.receipt .btn {
    width: 72px;
    height: 33px;
    margin-top: 2px;
}
.pay-right {
    width: 153px;
}
.pay-methods {
    display: grid;
    grid-template-columns: 50px 103px;
    grid-auto-rows: 20px;
}
.pay-methods .btn {
    justify-content: space-between;
    padding: 0 3px 0 4px;
}
.currency {
    display: flex;
    align-items: flex-start;
    gap: 7px;
    padding: 3px 2px 0 3px;
}
.refresh {
    width: 38px;
    height: 34px;
    margin-top: 4px;
}
.rates {
    flex: 1;
    display: grid;
    grid-template-columns: 43px 1fr;
    grid-auto-rows: 20px;
}
.rates label {
    padding-top: 5px;
}
.rates input[type="text"] {
    width: 100%;
}
```
